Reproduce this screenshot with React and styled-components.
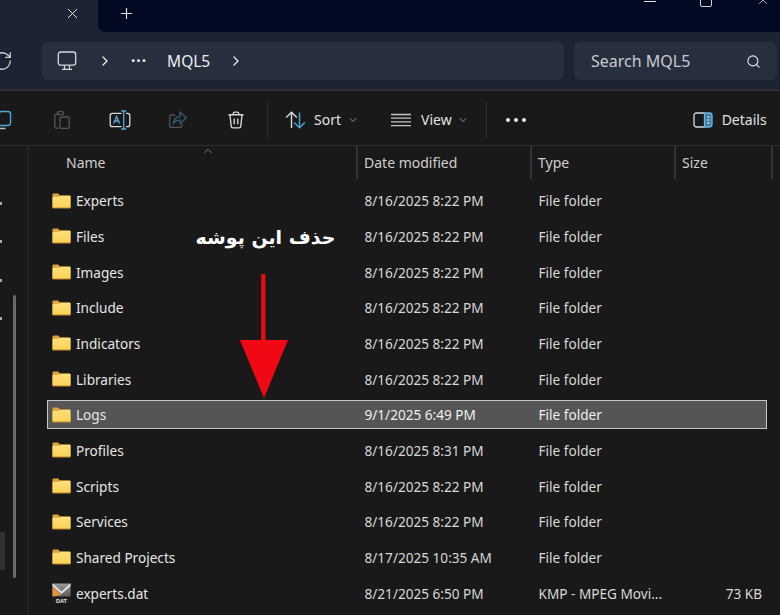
import React from "react";
import styled, { createGlobalStyle } from "styled-components";
import { X, Plus, RotateCw, ChevronRight, ChevronDown, ChevronUp, Search } from "lucide-react";

const rows = [
  { name: "Experts", date: "8/16/2025 8:22 PM", type: "File folder" },
  { name: "Files", date: "8/16/2025 8:22 PM", type: "File folder" },
  { name: "Images", date: "8/16/2025 8:22 PM", type: "File folder" },
  { name: "Include", date: "8/16/2025 8:22 PM", type: "File folder" },
  { name: "Indicators", date: "8/16/2025 8:22 PM", type: "File folder" },
  { name: "Libraries", date: "8/16/2025 8:22 PM", type: "File folder" },
  { name: "Logs", date: "9/1/2025 6:49 PM", type: "File folder", selected: true },
  { name: "Profiles", date: "8/16/2025 8:31 PM", type: "File folder" },
  { name: "Scripts", date: "8/16/2025 8:22 PM", type: "File folder" },
  { name: "Services", date: "8/16/2025 8:22 PM", type: "File folder" },
  { name: "Shared Projects", date: "8/17/2025 10:35 AM", type: "File folder" },
  { name: "experts.dat", date: "8/21/2025 6:50 PM", type: "KMP - MPEG Movi...", size: "73 KB", file: true },
];

const FolderIcon = () => (
  <svg width="19" height="16" viewBox="0 0 19 16">
    <defs>
      <linearGradient id="folderFill" x1="0" y1="0" x2="0" y2="1">
        <stop offset="0" stopColor="#fee07a" />
        <stop offset="1" stopColor="#f9d257" />
      </linearGradient>
    </defs>
    <path d="M0.5 1.6C0.5 1 1 0.6 1.6 0.6h4.6l1.8 1.8h9.4c0.6 0 1.1 0.5 1.1 1.1v10.4c0 0.7-0.5 1.2-1.2 1.2H1.7c-0.7 0-1.2-0.5-1.2-1.2z" fill="#dba33a" />
    <path d="M0.5 4.4c0-0.4 0.3-0.7 0.7-0.7h6l1.4-0.9h9.2c0.4 0 0.7 0.3 0.7 0.7v10.2c0 0.6-0.4 1-1 1H1.5c-0.6 0-1-0.4-1-1z" fill="url(#folderFill)" />
    <rect x="0.5" y="14.4" width="18" height="1" fill="#d99f33" />
  </svg>
);

const DatIcon = () => (
  <svg width="19" height="21" viewBox="0 0 19 21">
    <defs>
      <linearGradient id="datFill" x1="0" y1="0" x2="0" y2="1">
        <stop offset="0" stopColor="#9a9a9a" />
        <stop offset="1" stopColor="#5c5c5c" />
      </linearGradient>
    </defs>
    <rect x="0.5" y="0.5" width="18" height="13" fill="url(#datFill)" />
    <path d="M0.5 0.5L9.5 8.5L18.5 0.5V3L9.5 11L0.5 3z" fill="#e9e9e9" />
    <path d="M0.5 4L9.5 12L0.5 13.5z" fill="#e8923a" />
    <rect x="0.5" y="14" width="18" height="6.5" fill="#1f1f1f" />
    <text x="9.5" y="19.6" textAnchor="middle" fontSize="5.6" fontWeight="700" fontFamily="Liberation Sans, sans-serif" fill="#e6e6e6">DAT</text>
  </svg>
);

const MonitorIcon = () => (
  <svg width="20" height="20" viewBox="0 0 20 20" fill="none" stroke="#d6d8dc" strokeWidth="1.3">
    <rect x="1.3" y="1" width="17.4" height="13.2" rx="2.4" />
    <path d="M5 18.4h10M7.5 14.5v3.4M12.5 14.5v3.4" />
  </svg>
);

const CopyIcon = () => (
  <svg width="20" height="20" viewBox="0 0 20 20" fill="none" strokeWidth="1.4">
    <rect x="5" y="1.5" width="11.5" height="14" rx="2.4" stroke="#4aa7d8" />
    <path d="M2.5 6v9.5c0 1.8 1.2 3 3 3h6" stroke="#b8c0c6" />
  </svg>
);

const PasteIcon = () => (
  <svg width="20" height="20" viewBox="0 0 20 20" fill="none" stroke="#555" strokeWidth="1.3">
    <path d="M7 4H4.4c-1 0-1.6 0.6-1.6 1.6v11c0 1 0.6 1.6 1.6 1.6H7" />
    <rect x="5.5" y="1.6" width="6" height="3" rx="1.2" />
    <rect x="8" y="7" width="9.2" height="11.4" rx="1.6" />
  </svg>
);

const RenameIcon = () => (
  <svg width="22" height="20" viewBox="0 0 22 20" fill="none" strokeWidth="1.3">
    <path d="M12.5 3.4H3.4C2 3.4 1.2 4.2 1.2 5.6v8.8c0 1.4 0.8 2.2 2.2 2.2h9.1" stroke="#d4d6d8" />
    <path d="M17 3.4h1.6c1.4 0 2.2 0.8 2.2 2.2v8.8c0 1.4-0.8 2.2-2.2 2.2H17" stroke="#d4d6d8" />
    <path d="M12.2 1h5M12.2 19h5M14.7 1v18" stroke="#58acd9" />
    <path d="M4.6 13.5L7.6 6.5L10.6 13.5M5.7 11h3.8" stroke="#58acd9" />
  </svg>
);

const ShareIcon = () => (
  <svg width="20" height="20" viewBox="0 0 20 20" fill="none" strokeWidth="1.3">
    <path d="M7 5H3.8C2.4 5 1.6 5.8 1.6 7.2v8c0 1.4 0.8 2.2 2.2 2.2h8c1.4 0 2.2-0.8 2.2-2.2V13" stroke="#4e5358" />
    <path d="M12 2.2l6.4 5.6-6.4 5.6v-3.2c-3.2 0-5 1-6.6 3.2 0.4-4 2.6-6.6 6.6-6.8z" stroke="#2f5d78" />
  </svg>
);

const TrashIcon = () => (
  <svg width="18" height="20" viewBox="0 0 20 20" fill="none" stroke="#d8d8d8" strokeWidth="1.5">
    <path d="M1.6 4.2h16.8M7 4V2.8C7 1.8 7.6 1.2 8.6 1.2h2.8c1 0 1.6 0.6 1.6 1.6V4" />
    <path d="M3.4 4.4l1.2 12.4c0.1 1.2 0.9 2 2.1 2h6.6c1.2 0 2-0.8 2.1-2l1.2-12.4" />
    <path d="M8 8.2v6.4M12 8.2v6.4" />
  </svg>
);

const SortIcon = () => (
  <svg width="21" height="18" viewBox="0 0 21 18" fill="none" strokeWidth="1.4">
    <path d="M6.5 17V1.5M1.2 6.6L6.5 1.3L11.8 6.6" stroke="#d7dbe0" />
    <path d="M14.5 1.5V17M9.2 11.6L14.5 16.8L19.8 11.6" stroke="#4aa7d8" />
  </svg>
);

const ViewIcon = () => (
  <svg width="20" height="14" viewBox="0 0 20 14" stroke="#c4c4c4" strokeWidth="1.3">
    <path d="M0 1.5h20M0 5.2h20M0 8.9h20M0 12.6h20" />
  </svg>
);

const DetailsIcon = () => (
  <svg width="20" height="16" viewBox="0 0 20 16" fill="none" strokeWidth="1.3">
    <path d="M11.5 1H3.4C1.9 1 1 1.9 1 3.4v9.2C1 14.1 1.9 15 3.4 15h8.1" stroke="#d4d8dc" />
    <path d="M11.5 1h5.1C18.1 1 19 1.9 19 3.4v9.2c0 1.5-0.9 2.4-2.4 2.4h-5.1z" fill="#3f7fa6" stroke="#6cb6de" />
    <path d="M14 5h2.6M14 8h2.6M14 11h2.6" stroke="#d9ecf7" strokeWidth="1" />
  </svg>
);

const ArrowMark = () => (
  <svg width="50" height="124" viewBox="0 0 50 124">
    <rect x="22.2" y="0" width="4.2" height="68" fill="#ee0a14" />
    <path d="M1 66h48L25 124z" fill="#f00814" />
  </svg>
);

const GlobalStyle = createGlobalStyle`
  html, body {
    margin: 0;
    padding: 0;
    background: #191919;
  }
  * {
    box-sizing: border-box;
  }
`;

const Window = styled.div`
  position: relative;
  width: 780px;
  height: 615px;
  overflow: hidden;
  display: flex;
  flex-direction: column;
  background: #191919;
  color: #dedede;
  font-family: "Noto Sans", "Open Sans", sans-serif;
  font-size: 14px;
`;

const TitleBar = styled.div`
  height: 32px;
  flex: none;
  display: flex;
  background: #1c2333;
`;

const TabClose = styled.div`
  width: 98px;
  flex: none;
  display: flex;
  align-items: center;
  justify-content: flex-end;
  padding: 0 17px 6px 0;
  color: #e8e8e8;
`;

const TabStrip = styled.div`
  flex: 1;
  display: flex;
  align-items: center;
  padding: 0 0 6px 20px;
  background: #020a23;
  border-bottom-left-radius: 7px;
  color: #e8e8e8;
  position: relative;
`;

const WindowControls = styled.div`
  position: absolute;
  top: -7px;
  right: 10px;
  display: flex;
  align-items: flex-start;
  gap: 44px;
  color: #dcdcdc;
`;

const MinimizeLine = styled.div`
  width: 12px;
  height: 8.5px;
  border-bottom: 1.5px solid #e4e4e4;
`;

const MaximizeBox = styled.div`
  width: 12px;
  height: 13.5px;
  border: 1.4px solid #d4d4d4;
  border-radius: 2px;
`;

const AddressBar = styled.div`
  height: 59px;
  flex: none;
  display: flex;
  gap: 10px;
  padding: 10px 3px 9px 0;
  background: #1c2333;
  border-bottom: 2px solid #2c2d31;
`;

const RefreshSlot = styled.div`
  width: 32px;
  flex: none;
  display: flex;
  align-items: center;
  color: #d0d2d6;

  svg {
    margin-left: -9px;
  }
`;

const Breadcrumb = styled.div`
  flex: 1;
  display: flex;
  align-items: center;
  padding-left: 15px;
  background: #272e3d;
  border-radius: 6px;
  color: #eceef0;
  font-size: 15.5px;
`;

const Crumb = styled.div`
  display: flex;
  align-items: center;
  justify-content: center;
  margin-left: ${(p) => p.$gap || 0}px;
`;

const DotsSmall = styled.span`
  letter-spacing: 1px;
  font-weight: 700;
  line-height: 1;
  position: relative;
  top: -4px;
`;

const SearchBox = styled.div`
  width: 203px;
  flex: none;
  display: flex;
  align-items: center;
  justify-content: space-between;
  padding: 0 16px 0 17px;
  background: #272e3d;
  border-radius: 6px;
  color: #c8cbcf;
  font-size: 16px;
`;

const Toolbar = styled.div`
  height: 55px;
  flex: none;
  display: flex;
  align-items: center;
  border-bottom: 1px solid #2d2d2d;
  padding-top: 3px;
`;

const IconGroup = styled.div`
  display: flex;
  margin-left: -25px;
`;

const IconButton = styled.div`
  width: 58px;
  display: flex;
  justify-content: center;
  align-items: center;
`;

const Separator = styled.div`
  width: 1px;
  height: 34px;
  background: #2e2e2e;
  margin-left: ${(p) => p.$left}px;
`;

const ToolButton = styled.div`
  display: flex;
  align-items: center;
  gap: ${(p) => p.$gap}px;
  margin-left: ${(p) => p.$left}px;
  color: #e2e2e2;
`;

const Caret = styled.span`
  display: flex;
  margin-left: ${(p) => p.$left}px;
  color: #a8a8a8;
`;

const MoreDots = styled.div`
  margin-left: 19px;
  display: flex;
  gap: 4px;
`;

const Dot = styled.span`
  width: 4px;
  height: 4px;
  border-radius: 50%;
  background: #ececec;
`;

const Body = styled.div`
  flex: 1;
  display: flex;
  min-height: 0;
`;

const Sidebar = styled.div`
  width: 29px;
  flex: none;
  display: flex;
  flex-direction: column;
  align-items: flex-start;
  border-right: 2px solid #222;
  position: relative;
`;

const SideTicks = styled.div`
  display: flex;
  flex-direction: column;
  gap: 35.4px;
  padding-top: 56px;
`;

const SideTick = styled.span`
  width: 2px;
  height: 3px;
  background: #a8a8a8;
`;

const ScrollThumb = styled.div`
  position: absolute;
  left: 13px;
  top: 149px;
  width: 3px;
  height: 283px;
  background: #696969;
  border-radius: 2px;
`;

const SideActive = styled.div`
  position: absolute;
  left: 0;
  top: 386px;
  width: 5px;
  height: 38px;
  background: #303030;
`;

const Content = styled.div`
  flex: 1;
  min-width: 0;
  display: flex;
  flex-direction: column;
`;

const HeaderRow = styled.div`
  height: 33px;
  flex: none;
  display: grid;
  grid-template-columns: 329px 174px 144px 97px;
  color: #cfcfcf;
  position: relative;
`;

const HeaderCell = styled.div`
  display: flex;
  align-items: center;
  padding-left: ${(p) => p.$pad}px;
  border-right: 2px solid #333;
`;

const SortCaret = styled.span`
  position: absolute;
  left: 172px;
  top: -2px;
  display: flex;
  color: #8e8e8e;
`;

const List = styled.div`
  padding: 4px 0 0 18px;
  display: flex;
  flex-direction: column;
  font-size: 13.6px;
`;

const Row = styled.div`
  height: 35.67px;
  flex: none;
  display: flex;
  align-items: center;
`;

const RowBody = styled.div`
  width: 720px;
  height: 29px;
  display: grid;
  grid-template-columns: 310px 174px 144px 92px;
  align-items: center;
  background: ${(p) => (p.$selected ? "#555555" : "transparent")};
  outline: ${(p) => (p.$selected ? "1.5px solid #c6c6c6" : "none")};
  outline-offset: -1px;
  color: ${(p) => (p.$selected ? "#eeeeee" : "#d8d8d8")};
`;

const NameCell = styled.div`
  display: flex;
  align-items: center;
  gap: 5px;
  padding-left: 5px;
  color: #e6e6e6;
  white-space: nowrap;
`;

const TextCell = styled.div`
  padding-left: 7.5px;
  white-space: nowrap;
`;

const SizeCell = styled.div`
  padding-right: 5px;
  text-align: right;
  white-space: nowrap;
`;

const Callout = styled.div`
  position: absolute;
  left: 195px;
  top: 222px;
  width: 141px;
  text-align: center;
  color: #ffffff;
  font-family: "DejaVu Sans", sans-serif;
  font-weight: 700;
  font-size: 19px;
  line-height: 30px;
  white-space: nowrap;
`;

const CalloutArrow = styled.div`
  position: absolute;
  left: 239px;
  top: 274px;
  display: flex;
`;

export default function App() {
  return (
    <>
      <GlobalStyle />
      <Window>
        <TitleBar>
          <TabClose>
            <X size={17} strokeWidth={1.4} />
          </TabClose>
          <TabStrip>
            <Plus size={17} strokeWidth={1.6} />
            <WindowControls>
              <MinimizeLine />
              <MaximizeBox />
              <X size={14} strokeWidth={1.4} />
            </WindowControls>
          </TabStrip>
        </TitleBar>

        <AddressBar>
          <RefreshSlot>
            <RotateCw size={22} strokeWidth={1.4} />
          </RefreshSlot>
          <Breadcrumb>
            <MonitorIcon />
            <Crumb $gap={20}>
              <ChevronRight size={16} strokeWidth={1.8} />
            </Crumb>
            <Crumb $gap={18}>
              <DotsSmall>...</DotsSmall>
            </Crumb>
            <Crumb $gap={20}>MQL5</Crumb>
            <Crumb $gap={18}>
              <ChevronRight size={16} strokeWidth={1.8} />
            </Crumb>
          </Breadcrumb>
          <SearchBox>
            Search MQL5
            <Search size={15} strokeWidth={1.8} color="#e4e6e8" />
          </SearchBox>
        </AddressBar>

        <Toolbar>
          <IconGroup>
            <IconButton><CopyIcon /></IconButton>
            <IconButton><PasteIcon /></IconButton>
            <IconButton><RenameIcon /></IconButton>
            <IconButton><ShareIcon /></IconButton>
            <IconButton><TrashIcon /></IconButton>
          </IconGroup>
          <Separator $left={2} />
          <ToolButton $left={17} $gap={8}>
            <SortIcon />
            Sort
          </ToolButton>
          <Caret $left={6}>
            <ChevronDown size={12} strokeWidth={1.6} />
          </Caret>
          <ToolButton $left={32} $gap={10}>
            <ViewIcon />
            View
          </ToolButton>
          <Caret $left={5}>
            <ChevronDown size={12} strokeWidth={1.6} />
          </Caret>
          <Separator $left={17} />
          <MoreDots>
            <Dot />
            <Dot />
            <Dot />
          </MoreDots>
          <ToolButton $left={167} $gap={9}>
            <DetailsIcon />
            Details
          </ToolButton>
        </Toolbar>

        <Body>
          <Sidebar>
            <SideTicks>
              <SideTick />
              <SideTick />
              <SideTick />
              <SideTick />
            </SideTicks>
            <ScrollThumb />
            <SideActive />
          </Sidebar>
          <Content>
            <HeaderRow>
              <SortCaret>
                <ChevronUp size={14} strokeWidth={1.4} />
              </SortCaret>
              <HeaderCell $pad={37}>Name</HeaderCell>
              <HeaderCell $pad={6}>Date modified</HeaderCell>
              <HeaderCell $pad={6}>Type</HeaderCell>
              <HeaderCell $pad={6}>Size</HeaderCell>
            </HeaderRow>
            <List>
              {rows.map((row) => (
                <Row key={row.name}>
                  <RowBody $selected={row.selected}>
                    <NameCell>
                      {row.file ? <DatIcon /> : <FolderIcon />}
                      {row.name}
                    </NameCell>
                    <TextCell>{row.date}</TextCell>
                    <TextCell>{row.type}</TextCell>
                    <SizeCell>{row.size}</SizeCell>
                  </RowBody>
                </Row>
              ))}
            </List>
          </Content>
        </Body>

        <Callout dir="rtl" lang="fa">حذف این پوشه</Callout>
        <CalloutArrow>
          <ArrowMark />
        </CalloutArrow>
      </Window>
    </>
  );
}
